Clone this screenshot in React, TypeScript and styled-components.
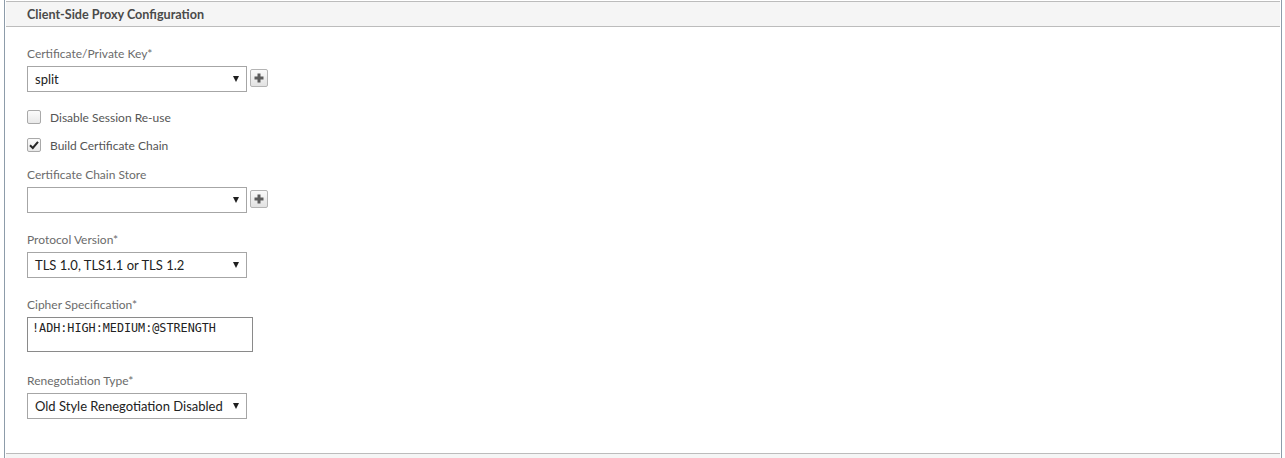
import { createGlobalStyle, styled } from "styled-components"

const GlobalStyle = createGlobalStyle`
  html, body {
    margin: 0;
    padding: 0;
    background: #ffffff;
  }
  body {
    font-family: Lato, "Open Sans", sans-serif;
  }
`

interface FieldProps {
  $top: number
}
interface SelectProps {
  $width: number
}
interface CheckProps {
  $checked: boolean
}

const Frame = styled.div`
  margin-left: 4px;
  width: 1278px;
  height: 458px;
  border-left: 1px solid #8d9caa;
  border-right: 1px solid #8d9caa;
  padding: 1px 1px 0 1px;
  box-sizing: border-box;
  display: flex;
  flex-direction: column;
`

const Section = styled.section`
  border-top: 1px solid #bcbcbc;
  border-bottom: 1px solid #bcbcbc;
  height: 453px;
  box-sizing: border-box;
  display: flex;
  flex-direction: column;
`

const SectionHeader = styled.div`
  height: 24px;
  background: #f5f5f5;
  border-bottom: 1px solid #bcbcbc;
  padding-left: 21px;
  display: flex;
  align-items: center;
  font-size: 12.6px;
  font-weight: 700;
  color: #4a4a4a;
`

const NextStrip = styled.div`
  flex: 1;
  background: #f5f5f5;
`

const Body = styled.div`
  padding-left: 21px;
  display: flex;
  flex-direction: column;
`

const Field = styled.div<FieldProps>`
  margin-top: ${({ $top }) => $top}px;
  display: flex;
  flex-direction: column;
`

const Label = styled.label`
  font-size: 12px;
  line-height: 16px;
  color: #6b6b6b;
  margin-bottom: 4px;
`

const Row = styled.div`
  display: flex;
  align-items: center;
  gap: 3px;
`

const SelectBox = styled.div<SelectProps>`
  width: ${({ $width }) => $width}px;
  height: 26px;
  box-sizing: border-box;
  border: 1px solid #a6a6a6;
  background: #ffffff;
  padding: 0 7px 0 7px;
  display: flex;
  align-items: center;
  justify-content: space-between;
  font-size: 13px;
  color: #222222;
`

const Arrow = styled.span`
  width: 0;
  height: 0;
  border-left: 3.5px solid transparent;
  border-right: 3.5px solid transparent;
  border-top: 6px solid #1e1e1e;
  margin-top: -1px;
`

const AddButton = styled.button`
  width: 18px;
  height: 18px;
  padding: 0;
  margin-top: -3px;
  box-sizing: border-box;
  border: 1px solid #b4b4b4;
  border-radius: 2px;
  background: linear-gradient(#fafafa, #e2e2e2);
  display: flex;
  align-items: center;
  justify-content: center;
`

const CheckRow = styled.div<FieldProps>`
  margin-top: ${({ $top }) => $top}px;
  display: flex;
  align-items: center;
  gap: 9px;
  height: 16px;
  font-size: 12px;
  color: #555555;
`

const CheckBox = styled.span<CheckProps>`
  width: 14px;
  height: 14px;
  box-sizing: border-box;
  border: 1px solid #a9a9a9;
  border-radius: 2px;
  background: linear-gradient(#fbfbfb, #e9e9e9);
  display: flex;
  align-items: center;
  justify-content: center;
`

const CipherArea = styled.textarea`
  width: 226px;
  height: 35px;
  box-sizing: border-box;
  margin: 0;
  border: 1px solid #8a8a8a;
  padding: 3px 4px;
  resize: none;
  overflow: hidden;
  font-family: "DejaVu Sans Mono", "Liberation Mono", monospace;
  font-size: 11.75px;
  line-height: 15px;
  color: #222222;
  outline: none;
`

function PlusIcon() {
  return (
    <svg width="10" height="10" viewBox="0 0 10 10">
      <rect x="3.5" y="0.5" width="3" height="9" fill="#5c5c5c" />
      <rect x="0.5" y="3.5" width="9" height="3" fill="#5c5c5c" />
    </svg>
  )
}

function CheckMark() {
  return (
    <svg width="10" height="10" viewBox="0 0 10 10">
      <path d="M1 5.2 L3.8 8 L9 1.8" fill="none" stroke="#262626" strokeWidth="2" />
    </svg>
  )
}

function Select({ value, width }: { value: string; width: number }) {
  return (
    <SelectBox $width={width}>
      <span>{value}</span>
      <Arrow />
    </SelectBox>
  )
}

export default function App() {
  return (
    <>
      <GlobalStyle />
      <Frame>
        <Section>
          <SectionHeader>Client-Side Proxy Configuration</SectionHeader>
          <Body>
            <Field $top={19}>
              <Label>Certificate/Private Key*</Label>
              <Row>
                <Select value="split" width={220} />
                <AddButton><PlusIcon /></AddButton>
              </Row>
            </Field>
            <CheckRow $top={17}>
              <CheckBox $checked={false} />
              Disable Session Re-use
            </CheckRow>
            <CheckRow $top={12}>
              <CheckBox $checked={true}><CheckMark /></CheckBox>
              Build Certificate Chain
            </CheckRow>
            <Field $top={14}>
              <Label>Certificate Chain Store</Label>
              <Row>
                <Select value="" width={220} />
                <AddButton><PlusIcon /></AddButton>
              </Row>
            </Field>
            <Field $top={19}>
              <Label>Protocol Version*</Label>
              <Select value="TLS 1.0, TLS1.1 or TLS 1.2" width={220} />
            </Field>
            <Field $top={19}>
              <Label>Cipher Specification*</Label>
              <CipherArea readOnly value="!ADH:HIGH:MEDIUM:@STRENGTH" />
            </Field>
            <Field $top={21}>
              <Label>Renegotiation Type*</Label>
              <Select value="Old Style Renegotiation Disabled" width={220} />
            </Field>
          </Body>
        </Section>
        <NextStrip />
      </Frame>
    </>
  )
}
